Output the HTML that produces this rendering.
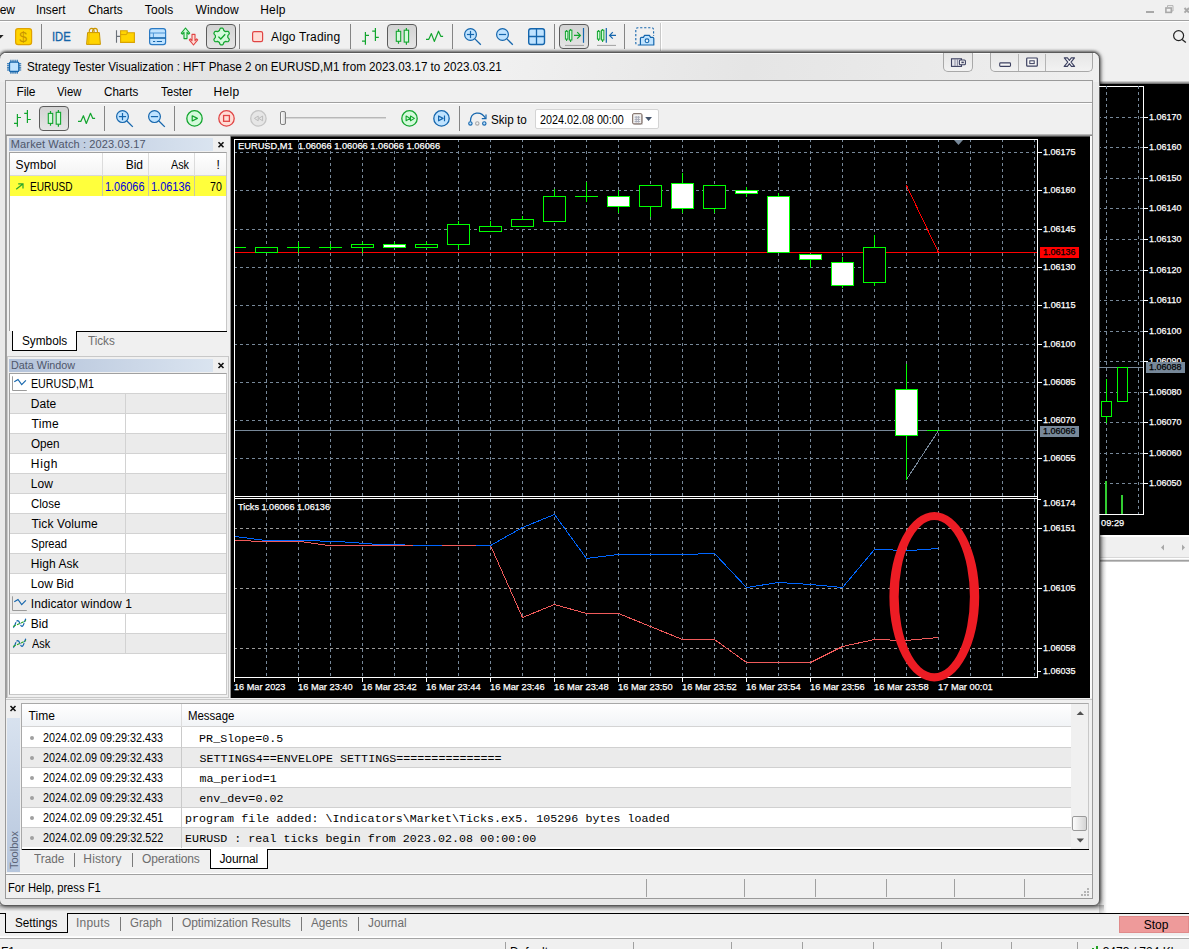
<!DOCTYPE html>
<html><head><meta charset="utf-8"><title>Strategy Tester Visualization</title>
<style>
html,body{margin:0;padding:0;background:#f0f0f0;}
#root{position:relative;width:1189px;height:949px;overflow:hidden;background:#f0f0f0;font-family:'Liberation Sans', sans-serif;}
#root div,#root span,#root svg{position:absolute;box-sizing:border-box;}
#root span{display:block;}
</style></head><body><div id="root">
<div style="left:0px;top:20px;width:1189px;height:1px;background:#a0a0a0;"></div>
<div style="left:0px;top:21px;width:1189px;height:1px;background:#ffffff;"></div>
<div style="left:41px;top:24px;width:1px;height:25px;background:#858585;"></div>
<div style="left:239px;top:24px;width:1px;height:25px;background:#858585;"></div>
<div style="left:350px;top:24px;width:1px;height:25px;background:#858585;"></div>
<div style="left:452px;top:24px;width:1px;height:25px;background:#858585;"></div>
<div style="left:554px;top:24px;width:1px;height:25px;background:#858585;"></div>
<div style="left:624px;top:24px;width:1px;height:25px;background:#858585;"></div>
<div style="left:660px;top:23px;width:1px;height:28px;background:#c8c8c8;"></div>
<div style="left:661px;top:23px;width:1px;height:28px;background:#ffffff;"></div>
<div style="left:206px;top:24px;width:30px;height:25px;background:linear-gradient(#d3d3d3,#e5e5e5);border:1px solid #5c5c5c;border-radius:4px;"></div>
<div style="left:387px;top:24px;width:30px;height:25px;background:linear-gradient(#d3d3d3,#e5e5e5);border:1px solid #5c5c5c;border-radius:4px;"></div>
<div style="left:559px;top:24px;width:30px;height:25px;background:linear-gradient(#d3d3d3,#e5e5e5);border:1px solid #5c5c5c;border-radius:4px;"></div>
<div style="left:1099px;top:81px;width:90px;height:3px;background:linear-gradient(#e0e0e0,#606060);"></div>
<div style="left:1099px;top:84px;width:90px;height:452px;background:#000;"></div>
<div style="left:1099px;top:535px;width:90px;height:1px;background:#ffffff;"></div>
<div style="left:1099px;top:536px;width:90px;height:1px;background:#ffffff;"></div>
<div style="left:1099px;top:537px;width:90px;height:20px;background:#f0f0f0;"></div>
<div style="left:1099px;top:557px;width:90px;height:1px;background:#d8d8d8;"></div>
<div style="left:1099px;top:558px;width:90px;height:1px;background:#ffffff;"></div>
<div style="left:1099px;top:559px;width:90px;height:1px;background:#e8e8e8;"></div>
<div style="left:1099px;top:560px;width:90px;height:1px;background:#a0a0a0;"></div>
<div style="left:1099px;top:561px;width:90px;height:1px;background:#c0c0c0;"></div>
<div style="left:1099px;top:562px;width:90px;height:351px;background:#fff;"></div>
<div style="left:1099px;top:537px;width:8px;height:376px;background:linear-gradient(90deg,rgba(0,0,0,.22),rgba(0,0,0,0));"></div>
<div style="left:0px;top:905px;width:1104px;height:8px;background:linear-gradient(rgba(0,0,0,.25),rgba(0,0,0,0) 80%);"></div>
<div style="left:0px;top:913px;width:1189px;height:1px;background:#000;"></div>
<div style="left:5px;top:913px;width:63px;height:20px;background:#f0f0f0;border:1px solid #000;border-top:none;"></div>
<div style="left:6px;top:913px;width:61px;height:1px;background:#f0f0f0;"></div>
<div style="left:120px;top:917px;width:1px;height:14px;background:#7a7a7a;"></div>
<div style="left:172px;top:917px;width:1px;height:14px;background:#7a7a7a;"></div>
<div style="left:301px;top:917px;width:1px;height:14px;background:#7a7a7a;"></div>
<div style="left:358px;top:917px;width:1px;height:14px;background:#7a7a7a;"></div>
<div style="left:1119px;top:916px;width:70px;height:17px;background:#ee9a9a;border:1px solid #e08a8a;"></div>
<div style="left:0px;top:936px;width:1189px;height:1px;background:#fbfbfb;"></div>
<div style="left:0px;top:937px;width:1189px;height:1px;background:#ffffff;"></div>
<div style="left:0px;top:938px;width:1189px;height:1px;background:#a4a4a4;"></div>
<div style="left:505px;top:942px;width:1px;height:7px;background:#a0a0a0;"></div>
<div style="left:633px;top:942px;width:1px;height:7px;background:#a0a0a0;"></div>
<div style="left:731px;top:942px;width:1px;height:7px;background:#a0a0a0;"></div>
<div style="left:802px;top:942px;width:1px;height:7px;background:#a0a0a0;"></div>
<div style="left:873px;top:942px;width:1px;height:7px;background:#a0a0a0;"></div>
<div style="left:941px;top:942px;width:1px;height:7px;background:#a0a0a0;"></div>
<div style="left:1011px;top:942px;width:1px;height:7px;background:#a0a0a0;"></div>
<div style="left:1077px;top:942px;width:1px;height:7px;background:#a0a0a0;"></div>
<div style="left:1092px;top:948px;width:2px;height:1px;background:#20a020;"></div>
<div style="left:1095.5px;top:946px;width:2px;height:3px;background:#20a020;"></div>
<div style="left:-1px;top:52px;width:1101px;height:854px;background:linear-gradient(100deg,#ededed 0%,#e3e3e3 22%,#f2f2f2 42%,#e5e5e5 68%,#efefef 100%) 0 0/100% 29px no-repeat,#e9e9e9;border:1px solid #5a5a5a;border-radius:7px 7px 6px 6px;box-shadow:0 -1px 3px rgba(0,0,0,.55),1px 1px 4px rgba(0,0,0,.5);"></div>
<div style="left:4px;top:53px;width:1091px;height:1px;background:#fbfbfb;"></div>
<div style="left:943px;top:53px;width:30px;height:19px;background:linear-gradient(#e6e6e6,#f2f2f2);border:1px solid #a8a8a8;border-top:none;border-radius:0 0 5px 5px;"></div>
<div style="left:990px;top:53px;width:103px;height:19px;background:linear-gradient(#e6e6e6,#f2f2f2);border:1px solid #a8a8a8;border-top:none;border-radius:0 0 5px 5px;"></div>
<div style="left:1018px;top:54px;width:1px;height:17px;background:#b4b4b4;"></div>
<div style="left:1045px;top:54px;width:1px;height:17px;background:#b4b4b4;"></div>
<div style="left:5px;top:80px;width:1088px;height:819px;background:#f0f0f0;border:1px solid #9a9a9a;"></div>
<div style="left:6px;top:102px;width:1086px;height:1px;background:#a0a0a0;"></div>
<div style="left:6px;top:103px;width:1086px;height:1px;background:#ffffff;"></div>
<div style="left:39px;top:106px;width:30px;height:25px;background:linear-gradient(#d3d3d3,#e5e5e5);border:1px solid #5c5c5c;border-radius:4px;"></div>
<div style="left:104px;top:106px;width:1px;height:25px;background:#858585;"></div>
<div style="left:174px;top:106px;width:1px;height:25px;background:#858585;"></div>
<div style="left:459px;top:106px;width:1px;height:25px;background:#858585;"></div>
<div style="left:286px;top:117px;width:100px;height:2px;background:#d6d6d6;border-top:1px solid #b8b8b8;"></div>
<div style="left:280px;top:111px;width:6px;height:14px;background:linear-gradient(90deg,#fff,#d8d8d8);border:1px solid #808080;border-radius:2px;"></div>
<div style="left:535px;top:109px;width:124px;height:20px;background:#fff;border:1px solid #d4d4d4;border-radius:2px;"></div>
<div style="left:6px;top:134px;width:1086px;height:1px;background:#b8b8b8;"></div>
<div style="left:6px;top:135px;width:1086px;height:1px;background:#8c8c8c;"></div>
<div style="left:6px;top:136px;width:225px;height:562px;background:#f0f0f0;"></div>
<div style="left:6px;top:136px;width:1px;height:562px;background:#a0a0a0;"></div>
<div style="left:7px;top:137px;width:222px;height:216px;background:#f0f0f0;"></div>
<div style="left:9px;top:138px;width:204px;height:13px;background:linear-gradient(90deg,#b3c2d9,#dae4f0);"></div>
<div style="left:9px;top:152px;width:218px;height:179px;background:#fff;border:1px solid #a0a0a0;border-bottom:none;border-right-color:#c8c8c8;"></div>
<div style="left:10px;top:153px;width:216px;height:23px;background:linear-gradient(#ffffff,#f3f3f3);"></div>
<div style="left:10px;top:175px;width:216px;height:1px;background:#d8d8d8;"></div>
<div style="left:102px;top:153px;width:1px;height:23px;background:#dcdcdc;"></div>
<div style="left:148px;top:153px;width:1px;height:23px;background:#dcdcdc;"></div>
<div style="left:194px;top:153px;width:1px;height:23px;background:#dcdcdc;"></div>
<div style="left:10px;top:176px;width:216px;height:20px;background:#ffff3c;"></div>
<div style="left:102px;top:176px;width:1px;height:20px;background:#c8c8a0;"></div>
<div style="left:148px;top:176px;width:1px;height:20px;background:#c8c8a0;"></div>
<div style="left:194px;top:176px;width:1px;height:20px;background:#c8c8a0;"></div>
<div style="left:77px;top:331px;width:150px;height:1px;background:#000;"></div>
<div style="left:12px;top:331px;width:65px;height:20px;background:#fff;border:1px solid #000;border-top:none;"></div>
<div style="left:7px;top:356px;width:222px;height:342px;background:#f0f0f0;border:1px solid #c8c8c8;"></div>
<div style="left:9px;top:359px;width:204px;height:13px;background:linear-gradient(90deg,#b3c2d9,#dae4f0);"></div>
<div style="left:9px;top:373px;width:218px;height:322px;background:#fff;border:1px solid #a0a0a0;border-right-color:#c8c8c8;border-bottom-color:#c8c8c8;"></div>
<div style="left:10px;top:393px;width:216px;height:1px;background:#d2d2d2;"></div>
<div style="left:10px;top:394px;width:216px;height:20px;background:#ebebeb;"></div>
<div style="left:10px;top:413px;width:216px;height:1px;background:#d2d2d2;"></div>
<div style="left:125px;top:394px;width:1px;height:20px;background:#d2d2d2;"></div>
<div style="left:10px;top:433px;width:216px;height:1px;background:#d2d2d2;"></div>
<div style="left:125px;top:414px;width:1px;height:20px;background:#d2d2d2;"></div>
<div style="left:10px;top:434px;width:216px;height:20px;background:#ebebeb;"></div>
<div style="left:10px;top:453px;width:216px;height:1px;background:#d2d2d2;"></div>
<div style="left:125px;top:434px;width:1px;height:20px;background:#d2d2d2;"></div>
<div style="left:10px;top:473px;width:216px;height:1px;background:#d2d2d2;"></div>
<div style="left:125px;top:454px;width:1px;height:20px;background:#d2d2d2;"></div>
<div style="left:10px;top:474px;width:216px;height:20px;background:#ebebeb;"></div>
<div style="left:10px;top:493px;width:216px;height:1px;background:#d2d2d2;"></div>
<div style="left:125px;top:474px;width:1px;height:20px;background:#d2d2d2;"></div>
<div style="left:10px;top:513px;width:216px;height:1px;background:#d2d2d2;"></div>
<div style="left:125px;top:494px;width:1px;height:20px;background:#d2d2d2;"></div>
<div style="left:10px;top:514px;width:216px;height:20px;background:#ebebeb;"></div>
<div style="left:10px;top:533px;width:216px;height:1px;background:#d2d2d2;"></div>
<div style="left:125px;top:514px;width:1px;height:20px;background:#d2d2d2;"></div>
<div style="left:10px;top:553px;width:216px;height:1px;background:#d2d2d2;"></div>
<div style="left:125px;top:534px;width:1px;height:20px;background:#d2d2d2;"></div>
<div style="left:10px;top:554px;width:216px;height:20px;background:#ebebeb;"></div>
<div style="left:10px;top:573px;width:216px;height:1px;background:#d2d2d2;"></div>
<div style="left:125px;top:554px;width:1px;height:20px;background:#d2d2d2;"></div>
<div style="left:10px;top:593px;width:216px;height:1px;background:#d2d2d2;"></div>
<div style="left:125px;top:574px;width:1px;height:20px;background:#d2d2d2;"></div>
<div style="left:10px;top:594px;width:216px;height:20px;background:#ebebeb;"></div>
<div style="left:10px;top:613px;width:216px;height:1px;background:#d2d2d2;"></div>
<div style="left:10px;top:633px;width:216px;height:1px;background:#d2d2d2;"></div>
<div style="left:125px;top:614px;width:1px;height:20px;background:#d2d2d2;"></div>
<div style="left:10px;top:634px;width:216px;height:20px;background:#ebebeb;"></div>
<div style="left:10px;top:653px;width:216px;height:1px;background:#d2d2d2;"></div>
<div style="left:125px;top:634px;width:1px;height:20px;background:#d2d2d2;"></div>
<div style="left:6px;top:698px;width:1086px;height:2px;background:#f0f0f0;"></div>
<div style="left:6px;top:699px;width:1086px;height:1px;background:#c8c8c8;"></div>
<div style="left:6px;top:700px;width:1086px;height:174px;background:#f0f0f0;"></div>
<div style="left:7px;top:718px;width:13px;height:154px;background:linear-gradient(#d8e2ef,#b6c6dd);"></div>
<div style="left:21px;top:703px;width:1068px;height:147px;background:#fff;border:1px solid #a8a8a8;border-bottom:none;border-right-color:#c8c8c8;"></div>
<div style="left:22px;top:704px;width:1049px;height:23px;background:linear-gradient(#ffffff,#f1f3f6);"></div>
<div style="left:22px;top:726px;width:1049px;height:1px;background:#d4d4d4;"></div>
<div style="left:181px;top:704px;width:1px;height:23px;background:#dcdcdc;"></div>
<div style="left:1071px;top:704px;width:17px;height:145px;background:#f0f0f0;"></div>
<div style="left:1072px;top:816px;width:15px;height:15px;background:linear-gradient(90deg,#fdfdfd,#d4d4d4);border:1px solid #9a9a9a;border-radius:2px;"></div>
<div style="left:22px;top:747px;width:1049px;height:1px;background:#d0d0d0;"></div>
<div style="left:181px;top:727px;width:1px;height:21px;background:#cacaca;"></div>
<div style="left:29.5px;top:735.5px;width:4px;height:4px;background:#a0a0a0;border-radius:2px;"></div>
<div style="left:22px;top:748px;width:1049px;height:19px;background:#ebebeb;"></div>
<div style="left:22px;top:767px;width:1049px;height:1px;background:#d0d0d0;"></div>
<div style="left:181px;top:747px;width:1px;height:21px;background:#cacaca;"></div>
<div style="left:29.5px;top:755.5px;width:4px;height:4px;background:#a0a0a0;border-radius:2px;"></div>
<div style="left:22px;top:787px;width:1049px;height:1px;background:#d0d0d0;"></div>
<div style="left:181px;top:767px;width:1px;height:21px;background:#cacaca;"></div>
<div style="left:29.5px;top:775.5px;width:4px;height:4px;background:#a0a0a0;border-radius:2px;"></div>
<div style="left:22px;top:788px;width:1049px;height:19px;background:#ebebeb;"></div>
<div style="left:22px;top:807px;width:1049px;height:1px;background:#d0d0d0;"></div>
<div style="left:181px;top:787px;width:1px;height:21px;background:#cacaca;"></div>
<div style="left:29.5px;top:795.5px;width:4px;height:4px;background:#a0a0a0;border-radius:2px;"></div>
<div style="left:22px;top:827px;width:1049px;height:1px;background:#d0d0d0;"></div>
<div style="left:181px;top:807px;width:1px;height:21px;background:#cacaca;"></div>
<div style="left:29.5px;top:815.5px;width:4px;height:4px;background:#a0a0a0;border-radius:2px;"></div>
<div style="left:22px;top:828px;width:1049px;height:19px;background:#ebebeb;"></div>
<div style="left:181px;top:827px;width:1px;height:21px;background:#cacaca;"></div>
<div style="left:29.5px;top:835.5px;width:4px;height:4px;background:#a0a0a0;border-radius:2px;"></div>
<div style="left:22px;top:849px;width:1067px;height:1px;background:#000;"></div>
<div style="left:210px;top:849px;width:58px;height:20px;background:#fff;border:1px solid #000;border-top:none;"></div>
<div style="left:74px;top:853px;width:1px;height:14px;background:#7a7a7a;"></div>
<div style="left:132px;top:853px;width:1px;height:14px;background:#7a7a7a;"></div>
<div style="left:6px;top:873px;width:1086px;height:1px;background:#ffffff;"></div>
<div style="left:6px;top:874px;width:1086px;height:1px;background:#a0a0a0;"></div>
<div style="left:646px;top:879px;width:1px;height:18px;background:#a0a0a0;"></div>
<div style="left:744px;top:879px;width:1px;height:18px;background:#a0a0a0;"></div>
<div style="left:815px;top:879px;width:1px;height:18px;background:#a0a0a0;"></div>
<div style="left:886px;top:879px;width:1px;height:18px;background:#a0a0a0;"></div>
<div style="left:954px;top:879px;width:1px;height:18px;background:#a0a0a0;"></div>
<div style="left:1024px;top:879px;width:1px;height:18px;background:#a0a0a0;"></div>
<div style="left:1084px;top:894px;width:2px;height:2px;background:#b4b4b4;"></div>
<div style="left:1087px;top:894px;width:2px;height:2px;background:#b4b4b4;"></div>
<div style="left:1087px;top:891px;width:2px;height:2px;background:#b4b4b4;"></div>
<div style="left:1087px;top:888px;width:2px;height:2px;background:#b4b4b4;"></div>
<div style="left:1084px;top:891px;width:2px;height:2px;background:#b4b4b4;"></div>
<div style="left:1081px;top:894px;width:2px;height:2px;background:#b4b4b4;"></div>
<svg width="1189" height="949" viewBox="0 0 1189 949" style="left:0;top:0">
<rect x="231" y="136" width="859" height="562" fill="#000" />
<rect x="230" y="136" width="861" height="1" fill="#4a4a4a" shape-rendering="crispEdges"/>
<rect x="230" y="136" width="1" height="562" fill="#909090" />
<g shape-rendering="crispEdges" stroke-dasharray="3 3" stroke-width="1" fill="none">
<line x1="266.5" y1="139" x2="266.5" y2="677" stroke="#778899"/>
<line x1="298.5" y1="139" x2="298.5" y2="677" stroke="#778899"/>
<line x1="330.5" y1="139" x2="330.5" y2="677" stroke="#778899"/>
<line x1="362.5" y1="139" x2="362.5" y2="677" stroke="#778899"/>
<line x1="394.5" y1="139" x2="394.5" y2="677" stroke="#778899"/>
<line x1="426.5" y1="139" x2="426.5" y2="677" stroke="#778899"/>
<line x1="458.5" y1="139" x2="458.5" y2="677" stroke="#778899"/>
<line x1="490.5" y1="139" x2="490.5" y2="677" stroke="#778899"/>
<line x1="522.5" y1="139" x2="522.5" y2="677" stroke="#778899"/>
<line x1="554.5" y1="139" x2="554.5" y2="677" stroke="#778899"/>
<line x1="586.5" y1="139" x2="586.5" y2="677" stroke="#778899"/>
<line x1="618.5" y1="139" x2="618.5" y2="677" stroke="#778899"/>
<line x1="650.5" y1="139" x2="650.5" y2="677" stroke="#778899"/>
<line x1="682.5" y1="139" x2="682.5" y2="677" stroke="#778899"/>
<line x1="714.5" y1="139" x2="714.5" y2="677" stroke="#778899"/>
<line x1="746.5" y1="139" x2="746.5" y2="677" stroke="#778899"/>
<line x1="778.5" y1="139" x2="778.5" y2="677" stroke="#778899"/>
<line x1="810.5" y1="139" x2="810.5" y2="677" stroke="#778899"/>
<line x1="842.5" y1="139" x2="842.5" y2="677" stroke="#778899"/>
<line x1="874.5" y1="139" x2="874.5" y2="677" stroke="#778899"/>
<line x1="906.5" y1="139" x2="906.5" y2="677" stroke="#778899"/>
<line x1="938.5" y1="139" x2="938.5" y2="677" stroke="#778899"/>
<line x1="970.5" y1="139" x2="970.5" y2="677" stroke="#778899"/>
<line x1="1002.5" y1="139" x2="1002.5" y2="677" stroke="#778899"/>
<line x1="1034.5" y1="139" x2="1034.5" y2="677" stroke="#778899"/>
<line x1="234" y1="152.5" x2="1037" y2="152.5" stroke="#778899"/>
<line x1="234" y1="190.5" x2="1037" y2="190.5" stroke="#778899"/>
<line x1="234" y1="229.5" x2="1037" y2="229.5" stroke="#778899"/>
<line x1="234" y1="267.5" x2="1037" y2="267.5" stroke="#778899"/>
<line x1="234" y1="305.5" x2="1037" y2="305.5" stroke="#778899"/>
<line x1="234" y1="344.5" x2="1037" y2="344.5" stroke="#778899"/>
<line x1="234" y1="382.5" x2="1037" y2="382.5" stroke="#778899"/>
<line x1="234" y1="420.5" x2="1037" y2="420.5" stroke="#778899"/>
<line x1="234" y1="458.5" x2="1037" y2="458.5" stroke="#778899"/>
<line x1="234" y1="528.5" x2="1037" y2="528.5" stroke="#9a9a9a"/>
<line x1="234" y1="588.5" x2="1037" y2="588.5" stroke="#9a9a9a"/>
<line x1="234" y1="648.5" x2="1037" y2="648.5" stroke="#9a9a9a"/>
</g>
<rect x="1090" y="136" width="2" height="562" fill="#fafafa" />
<rect x="234" y="139" width="804" height="1" fill="#ffffff" shape-rendering="crispEdges"/>
<rect x="234" y="139" width="1" height="539" fill="#ffffff" shape-rendering="crispEdges"/>
<rect x="1037" y="139" width="1" height="539" fill="#ffffff" shape-rendering="crispEdges"/>
<rect x="234" y="496" width="804" height="1" fill="#ffffff" shape-rendering="crispEdges"/>
<rect x="235" y="497" width="802" height="1" fill="#000" shape-rendering="crispEdges"/>
<rect x="234" y="498" width="804" height="1" fill="#ffffff" shape-rendering="crispEdges"/>
<rect x="234" y="677" width="804" height="1" fill="#ffffff" shape-rendering="crispEdges"/>
<rect x="1038" y="152" width="4" height="1" fill="#ffffff" shape-rendering="crispEdges"/>
<rect x="1038" y="190" width="4" height="1" fill="#ffffff" shape-rendering="crispEdges"/>
<rect x="1038" y="229" width="4" height="1" fill="#ffffff" shape-rendering="crispEdges"/>
<rect x="1038" y="267" width="4" height="1" fill="#ffffff" shape-rendering="crispEdges"/>
<rect x="1038" y="305" width="4" height="1" fill="#ffffff" shape-rendering="crispEdges"/>
<rect x="1038" y="344" width="4" height="1" fill="#ffffff" shape-rendering="crispEdges"/>
<rect x="1038" y="382" width="4" height="1" fill="#ffffff" shape-rendering="crispEdges"/>
<rect x="1038" y="420" width="4" height="1" fill="#ffffff" shape-rendering="crispEdges"/>
<rect x="1038" y="458" width="4" height="1" fill="#ffffff" shape-rendering="crispEdges"/>
<rect x="1038" y="528" width="4" height="1" fill="#ffffff" shape-rendering="crispEdges"/>
<rect x="1038" y="588" width="4" height="1" fill="#ffffff" shape-rendering="crispEdges"/>
<rect x="1038" y="648" width="4" height="1" fill="#ffffff" shape-rendering="crispEdges"/>
<rect x="1038" y="499" width="3" height="1" fill="#ffffff" shape-rendering="crispEdges"/>
<rect x="1038" y="671" width="3" height="1" fill="#ffffff" shape-rendering="crispEdges"/>
<rect x="234" y="677" width="1" height="5" fill="#ffffff" shape-rendering="crispEdges"/>
<rect x="298" y="677" width="1" height="5" fill="#ffffff" shape-rendering="crispEdges"/>
<rect x="362" y="677" width="1" height="5" fill="#ffffff" shape-rendering="crispEdges"/>
<rect x="426" y="677" width="1" height="5" fill="#ffffff" shape-rendering="crispEdges"/>
<rect x="490" y="677" width="1" height="5" fill="#ffffff" shape-rendering="crispEdges"/>
<rect x="554" y="677" width="1" height="5" fill="#ffffff" shape-rendering="crispEdges"/>
<rect x="618" y="677" width="1" height="5" fill="#ffffff" shape-rendering="crispEdges"/>
<rect x="682" y="677" width="1" height="5" fill="#ffffff" shape-rendering="crispEdges"/>
<rect x="746" y="677" width="1" height="5" fill="#ffffff" shape-rendering="crispEdges"/>
<rect x="810" y="677" width="1" height="5" fill="#ffffff" shape-rendering="crispEdges"/>
<rect x="874" y="677" width="1" height="5" fill="#ffffff" shape-rendering="crispEdges"/>
<rect x="235" y="430" width="802" height="1" fill="#778899" shape-rendering="crispEdges"/>
<rect x="235" y="252" width="802" height="1" fill="#ff0000" shape-rendering="crispEdges"/>
<rect x="255.5" y="247.5" width="22" height="5" fill="#000" stroke="#00ff00" stroke-width="1" shape-rendering="crispEdges"/>
<rect x="362" y="242" width="1" height="3" fill="#00ff00" shape-rendering="crispEdges"/>
<rect x="362" y="247" width="1" height="6" fill="#00ff00" shape-rendering="crispEdges"/>
<rect x="351.5" y="244.5" width="22" height="3" fill="#000" stroke="#00ff00" stroke-width="1" shape-rendering="crispEdges"/>
<rect x="394" y="242" width="1" height="3" fill="#00ff00" shape-rendering="crispEdges"/>
<rect x="383.5" y="244.5" width="22" height="3" fill="#fff" stroke="#00ff00" stroke-width="1" shape-rendering="crispEdges"/>
<rect x="426" y="242" width="1" height="3" fill="#00ff00" shape-rendering="crispEdges"/>
<rect x="415.5" y="244.5" width="22" height="3" fill="#000" stroke="#00ff00" stroke-width="1" shape-rendering="crispEdges"/>
<rect x="458" y="221" width="1" height="4" fill="#00ff00" shape-rendering="crispEdges"/>
<rect x="458" y="244" width="1" height="5" fill="#00ff00" shape-rendering="crispEdges"/>
<rect x="447.5" y="224.5" width="22" height="20" fill="#000" stroke="#00ff00" stroke-width="1" shape-rendering="crispEdges"/>
<rect x="490" y="221" width="1" height="6" fill="#00ff00" shape-rendering="crispEdges"/>
<rect x="479.5" y="226.5" width="22" height="5" fill="#000" stroke="#00ff00" stroke-width="1" shape-rendering="crispEdges"/>
<rect x="522" y="216" width="1" height="4" fill="#00ff00" shape-rendering="crispEdges"/>
<rect x="511.5" y="219.5" width="22" height="7" fill="#000" stroke="#00ff00" stroke-width="1" shape-rendering="crispEdges"/>
<rect x="554" y="189" width="1" height="8" fill="#00ff00" shape-rendering="crispEdges"/>
<rect x="543.5" y="196.5" width="22" height="25" fill="#000" stroke="#00ff00" stroke-width="1" shape-rendering="crispEdges"/>
<rect x="618" y="190" width="1" height="7" fill="#00ff00" shape-rendering="crispEdges"/>
<rect x="618" y="206" width="1" height="7" fill="#00ff00" shape-rendering="crispEdges"/>
<rect x="607.5" y="196.5" width="22" height="10" fill="#fff" stroke="#00ff00" stroke-width="1" shape-rendering="crispEdges"/>
<rect x="650" y="206" width="1" height="11" fill="#00ff00" shape-rendering="crispEdges"/>
<rect x="639.5" y="185.5" width="22" height="21" fill="#000" stroke="#00ff00" stroke-width="1" shape-rendering="crispEdges"/>
<rect x="682" y="173" width="1" height="11" fill="#00ff00" shape-rendering="crispEdges"/>
<rect x="682" y="208" width="1" height="5" fill="#00ff00" shape-rendering="crispEdges"/>
<rect x="671.5" y="183.5" width="22" height="25" fill="#fff" stroke="#00ff00" stroke-width="1" shape-rendering="crispEdges"/>
<rect x="714" y="208" width="1" height="5" fill="#00ff00" shape-rendering="crispEdges"/>
<rect x="703.5" y="185.5" width="22" height="23" fill="#000" stroke="#00ff00" stroke-width="1" shape-rendering="crispEdges"/>
<rect x="746" y="187" width="1" height="4" fill="#00ff00" shape-rendering="crispEdges"/>
<rect x="746" y="193" width="1" height="4" fill="#00ff00" shape-rendering="crispEdges"/>
<rect x="735.5" y="190.5" width="22" height="3" fill="#fff" stroke="#00ff00" stroke-width="1" shape-rendering="crispEdges"/>
<rect x="778" y="193" width="1" height="4" fill="#00ff00" shape-rendering="crispEdges"/>
<rect x="767.5" y="196.5" width="22" height="56" fill="#fff" stroke="#00ff00" stroke-width="1" shape-rendering="crispEdges"/>
<rect x="810" y="259" width="1" height="9" fill="#00ff00" shape-rendering="crispEdges"/>
<rect x="799.5" y="254.5" width="22" height="5" fill="#fff" stroke="#00ff00" stroke-width="1" shape-rendering="crispEdges"/>
<rect x="842" y="257" width="1" height="6" fill="#00ff00" shape-rendering="crispEdges"/>
<rect x="842" y="285" width="1" height="3" fill="#00ff00" shape-rendering="crispEdges"/>
<rect x="831.5" y="262.5" width="22" height="23" fill="#fff" stroke="#00ff00" stroke-width="1" shape-rendering="crispEdges"/>
<rect x="874" y="235" width="1" height="13" fill="#00ff00" shape-rendering="crispEdges"/>
<rect x="874" y="282" width="1" height="4" fill="#00ff00" shape-rendering="crispEdges"/>
<rect x="863.5" y="247.5" width="22" height="35" fill="#000" stroke="#00ff00" stroke-width="1" shape-rendering="crispEdges"/>
<rect x="906" y="364" width="1" height="26" fill="#00ff00" shape-rendering="crispEdges"/>
<rect x="906" y="435" width="1" height="45" fill="#00ff00" shape-rendering="crispEdges"/>
<rect x="895.5" y="389.5" width="22" height="46" fill="#fff" stroke="#00ff00" stroke-width="1" shape-rendering="crispEdges"/>
<rect x="235" y="247" width="11" height="1" fill="#00ff00" shape-rendering="crispEdges"/>
<rect x="287" y="247" width="23" height="1" fill="#00ff00" shape-rendering="crispEdges"/>
<rect x="298" y="242" width="1" height="11" fill="#00ff00" shape-rendering="crispEdges"/>
<rect x="319" y="247" width="23" height="1" fill="#00ff00" shape-rendering="crispEdges"/>
<rect x="330" y="244" width="1" height="6" fill="#00ff00" shape-rendering="crispEdges"/>
<rect x="575" y="196" width="23" height="1" fill="#00ff00" shape-rendering="crispEdges"/>
<rect x="586" y="182" width="1" height="20" fill="#00ff00" shape-rendering="crispEdges"/>
<rect x="927" y="430" width="23" height="1" fill="#00ff00" shape-rendering="crispEdges"/>
<g shape-rendering="crispEdges" stroke-width="1" fill="none">
<line x1="906.5" y1="185.5" x2="938.5" y2="252.5" stroke="#ff0000"/>
<line x1="906.5" y1="479.5" x2="938.5" y2="430.5" stroke="#778899"/>
<polyline points="235.5,540.5 265.5,541.5 300.5,541.5 328.5,545.5 490.5,545.5 522.5,617.5 554.5,604.5 586.5,613.5 618.5,613.5 682.5,639.5 714.5,639.5 746.5,662.5 810.5,662.5 842.5,646.5 874.5,639.5 905.5,640.5 938.5,637.5" stroke="#f05a5a"/>
<polyline points="235.5,536.5 250.5,538.5 265.5,540.5 300.5,540.5 338.5,541.5 378.5,544.5 430.5,545.5 490.5,545.5 522.5,527.5 554.5,514.5 586.5,558.5 618.5,554.5 682.5,554.5 714.5,553.5 746.5,587.5 778.5,582.5 810.5,584.5 842.5,587.5 874.5,549.5 910.5,550.5 938.5,548.5" stroke="#0066ff"/>
</g>
<rect x="379" y="545" width="34" height="1" fill="#f05a5a" shape-rendering="crispEdges"/>
<rect x="442" y="545" width="34" height="1" fill="#f05a5a" shape-rendering="crispEdges"/>
<polygon points="954,140 963,140 958.5,145" fill="#778899"/>
<path d="M889.4,596.7 a44.9,84.7 0 1,1 89.8,0 a44.9,84.7 0 1,1 -89.8,0 Z M898.6999999999999,596.7 a35.6,76.6 0 1,0 71.2,0 a35.6,76.6 0 1,0 -71.2,0 Z" fill="#ed1c24" fill-rule="evenodd"/>
<rect x="1099" y="86" width="45" height="1" fill="#ffffff" shape-rendering="crispEdges"/>
<rect x="1143" y="86" width="1" height="429" fill="#ffffff" shape-rendering="crispEdges"/>
<rect x="1099" y="514" width="45" height="1" fill="#ffffff" shape-rendering="crispEdges"/>
<g shape-rendering="crispEdges" stroke-dasharray="3 3" stroke-width="1" fill="none">
<line x1="1106.5" y1="86" x2="1106.5" y2="514" stroke="#778899"/>
<line x1="1138.5" y1="86" x2="1138.5" y2="514" stroke="#778899"/>
<line x1="1104" y1="117.5" x2="1143" y2="117.5" stroke="#778899"/>
<rect x="1100" y="117" width="1" height="1" fill="#778899"/>
<line x1="1104" y1="147.5" x2="1143" y2="147.5" stroke="#778899"/>
<rect x="1100" y="147" width="1" height="1" fill="#778899"/>
<line x1="1104" y1="178.5" x2="1143" y2="178.5" stroke="#778899"/>
<rect x="1100" y="178" width="1" height="1" fill="#778899"/>
<line x1="1104" y1="208.5" x2="1143" y2="208.5" stroke="#778899"/>
<rect x="1100" y="208" width="1" height="1" fill="#778899"/>
<line x1="1104" y1="239.5" x2="1143" y2="239.5" stroke="#778899"/>
<rect x="1100" y="239" width="1" height="1" fill="#778899"/>
<line x1="1104" y1="270.5" x2="1143" y2="270.5" stroke="#778899"/>
<rect x="1100" y="270" width="1" height="1" fill="#778899"/>
<line x1="1104" y1="300.5" x2="1143" y2="300.5" stroke="#778899"/>
<rect x="1100" y="300" width="1" height="1" fill="#778899"/>
<line x1="1104" y1="331.5" x2="1143" y2="331.5" stroke="#778899"/>
<rect x="1100" y="331" width="1" height="1" fill="#778899"/>
<line x1="1104" y1="361.5" x2="1143" y2="361.5" stroke="#778899"/>
<rect x="1100" y="361" width="1" height="1" fill="#778899"/>
<line x1="1104" y1="392.5" x2="1143" y2="392.5" stroke="#778899"/>
<rect x="1100" y="392" width="1" height="1" fill="#778899"/>
<line x1="1104" y1="422.5" x2="1143" y2="422.5" stroke="#778899"/>
<rect x="1100" y="422" width="1" height="1" fill="#778899"/>
<line x1="1104" y1="453.5" x2="1143" y2="453.5" stroke="#778899"/>
<rect x="1100" y="453" width="1" height="1" fill="#778899"/>
<line x1="1104" y1="483.5" x2="1143" y2="483.5" stroke="#778899"/>
<rect x="1100" y="483" width="1" height="1" fill="#778899"/>
</g>
<rect x="1144" y="117" width="4" height="1" fill="#ffffff" shape-rendering="crispEdges"/>
<rect x="1144" y="147" width="4" height="1" fill="#ffffff" shape-rendering="crispEdges"/>
<rect x="1144" y="178" width="4" height="1" fill="#ffffff" shape-rendering="crispEdges"/>
<rect x="1144" y="208" width="4" height="1" fill="#ffffff" shape-rendering="crispEdges"/>
<rect x="1144" y="239" width="4" height="1" fill="#ffffff" shape-rendering="crispEdges"/>
<rect x="1144" y="270" width="4" height="1" fill="#ffffff" shape-rendering="crispEdges"/>
<rect x="1144" y="300" width="4" height="1" fill="#ffffff" shape-rendering="crispEdges"/>
<rect x="1144" y="331" width="4" height="1" fill="#ffffff" shape-rendering="crispEdges"/>
<rect x="1144" y="361" width="4" height="1" fill="#ffffff" shape-rendering="crispEdges"/>
<rect x="1144" y="392" width="4" height="1" fill="#ffffff" shape-rendering="crispEdges"/>
<rect x="1144" y="422" width="4" height="1" fill="#ffffff" shape-rendering="crispEdges"/>
<rect x="1144" y="453" width="4" height="1" fill="#ffffff" shape-rendering="crispEdges"/>
<rect x="1144" y="483" width="4" height="1" fill="#ffffff" shape-rendering="crispEdges"/>
<rect x="1099" y="367" width="44" height="1" fill="#778899" shape-rendering="crispEdges"/>
<rect x="1106" y="379" width="1" height="23" fill="#00ff00" shape-rendering="crispEdges"/>
<rect x="1106" y="416" width="1" height="7" fill="#00ff00" shape-rendering="crispEdges"/>
<rect x="1101.5" y="401.5" width="10" height="15" fill="#000" stroke="#00ff00" shape-rendering="crispEdges"/>
<rect x="1117.5" y="367.5" width="10" height="34" fill="#000" stroke="#00ff00" shape-rendering="crispEdges"/>
<rect x="1105" y="481" width="2" height="33" fill="#32cd32" shape-rendering="crispEdges"/>
<rect x="1121" y="495" width="2" height="19" fill="#32cd32" shape-rendering="crispEdges"/>
<polygon points="1161,547.5 1164,544.5 1164,550.5" fill="#a8a8a8"/><polygon points="1185,547.5 1182,544.5 1182,550.5" fill="#a8a8a8"/>
<polygon points="-3,35 3.6,35 0.3,38.4" fill="#222"/>
<rect x="15.6" y="28.6" width="16" height="16" rx="2.6" fill="#ffd400" stroke="#e0a200" stroke-width="1.2"/>
<path d="M89.3,32.3 V31 a2.4,2.6 0 0 1 4.8,0 V32.3 M92.6,32.3 V31 a2.4,2.6 0 0 1 4.8,0 V32.3" fill="none" stroke="#c99500" stroke-width="1.1"/>
<path d="M87.6,32.6 H99.4 L100.4,44.4 H86.6 Z" fill="#ffd400" stroke="#c99500" stroke-width="1"/>
<path d="M89.3,32.6 L88.6,44.4" stroke="#e0b000" stroke-width="0.8"/>
<path d="M116.5,30.2 V42.8 M116.5,36.4 H120.5" stroke="#6a7078" stroke-width="1.1" fill="none"/>
<path d="M120.6,30.7 H127.2 V32.8 H134.4 V42.4 H120.6 Z" fill="#ffd400" stroke="#d9a300" stroke-width="1.1"/>
<path d="M120.6,34.6 H126 Q127.2,34.6 127.2,32.8" fill="none" stroke="#d9a300" stroke-width="1"/>
<rect x="149.6" y="28.6" width="16" height="16" rx="2.4" fill="#bfe3ff" stroke="#2a7ac4" stroke-width="1.2"/>
<path d="M150,33 H165.4 M153.4,33 V37.5" stroke="#4a94d6" stroke-width="1" fill="none"/>
<path d="M149.6,38 H165.6" stroke="#1566ad" stroke-width="1.6"/>
<path d="M153,41.5 H155.2 M156.8,41.5 H162" stroke="#1566ad" stroke-width="1.2"/>
<path d="M185.5,28 L189.7,33.2 L188.7,34.2 L187,32.4 V38.6 H184 V32.4 L182.3,34.2 L181.3,33.2 Z" fill="#d4fadb" stroke="#12a52e" stroke-width="1.1" stroke-linejoin="round"/>
<path d="M193.5,45 L197.7,39.8 L196.7,38.8 L195,40.6 V34.4 H192 V40.6 L190.3,38.8 L189.3,39.8 Z" fill="#ffddd6" stroke="#e04444" stroke-width="1.1" stroke-linejoin="round"/>
<polygon points="221.60,28.10 222.33,28.13 223.02,28.44 223.49,29.45 223.80,30.47 224.22,30.88 224.70,31.13 225.16,31.42 225.73,31.58 226.76,31.34 227.87,31.24 228.48,31.68 228.87,32.30 229.21,32.95 229.29,33.70 228.65,34.61 227.92,35.39 227.78,35.96 227.80,36.50 227.78,37.04 227.92,37.61 228.65,38.39 229.29,39.30 229.21,40.05 228.87,40.70 228.48,41.32 227.87,41.76 226.76,41.66 225.73,41.42 225.16,41.58 224.70,41.87 224.22,42.12 223.80,42.53 223.49,43.55 223.02,44.56 222.33,44.87 221.60,44.90 220.87,44.87 220.18,44.56 219.71,43.55 219.40,42.53 218.98,42.12 218.50,41.87 218.04,41.58 217.47,41.42 216.44,41.66 215.33,41.76 214.72,41.32 214.33,40.70 213.99,40.05 213.91,39.30 214.55,38.39 215.28,37.61 215.42,37.04 215.40,36.50 215.42,35.96 215.28,35.39 214.55,34.61 213.91,33.70 213.99,32.95 214.33,32.30 214.72,31.68 215.33,31.24 216.44,31.34 217.47,31.58 218.04,31.42 218.50,31.13 218.98,30.88 219.40,30.47 219.71,29.45 220.18,28.44 220.87,28.13" fill="#d4fadb" stroke="#12a52e" stroke-width="1.2" stroke-linejoin="round"/>
<path d="M218.4,36.6 L220.8,39 L225.2,34.2" fill="none" stroke="#12a52e" stroke-width="1.3"/>
<rect x="252.6" y="31.6" width="10" height="10" rx="1.6" fill="#ffddd6" stroke="#e04444" stroke-width="1.2"/>
<g transform="translate(0,0)"><path d="M365.4,32 V44.7 M362,41.2 H365.4 M365.4,35.4 H369 M375.4,28 V41 M372.2,31.2 H375.4 M375.4,37.4 H378.8" stroke="#12a52e" stroke-width="1.2" fill="none"/></g>
<g transform="translate(0,0)"><path d="M398.5,29 V43.7 M406.4,28 V44.7" stroke="#12a52e" stroke-width="1.2"/><rect x="396.3" y="31.3" width="4.4" height="10" fill="#d4fadb" stroke="#12a52e" stroke-width="1.1"/><rect x="404.2" y="30.2" width="4.4" height="11.9" fill="#d4fadb" stroke="#12a52e" stroke-width="1.1"/></g>
<g transform="translate(0,0)"><polyline points="426,39.3 428.8,39.3 431.4,33.6 434.3,41.4 438.5,31.2 440.8,36.3 443.1,36.3" stroke="#12a52e" stroke-width="1.2" fill="none" stroke-linejoin="round"/></g>
<g transform="translate(0,0)"><circle cx="470.5" cy="34.5" r="5.9" fill="#bfe3ff" stroke="#1566ad" stroke-width="1.2"/><path d="M474.9,38.9 L480.8,44.8" stroke="#1566ad" stroke-width="1.3"/><path d="M466.9,34.5 H474.1" stroke="#1566ad" stroke-width="1.2"/><path d="M470.5,30.9 V38.1" stroke="#1566ad" stroke-width="1.2"/></g>
<g transform="translate(0,0)"><circle cx="502.5" cy="34.5" r="5.9" fill="#bfe3ff" stroke="#1566ad" stroke-width="1.2"/><path d="M506.9,38.9 L512.8,44.8" stroke="#1566ad" stroke-width="1.3"/><path d="M498.9,34.5 H506.1" stroke="#1566ad" stroke-width="1.2"/></g>
<g transform="translate(-348,82.1)"><path d="M365.4,32 V44.7 M362,41.2 H365.4 M365.4,35.4 H369 M375.4,28 V41 M372.2,31.2 H375.4 M375.4,37.4 H378.8" stroke="#12a52e" stroke-width="1.2" fill="none"/></g>
<g transform="translate(-348,82.1)"><path d="M398.5,29 V43.7 M406.4,28 V44.7" stroke="#12a52e" stroke-width="1.2"/><rect x="396.3" y="31.3" width="4.4" height="10" fill="#d4fadb" stroke="#12a52e" stroke-width="1.1"/><rect x="404.2" y="30.2" width="4.4" height="11.9" fill="#d4fadb" stroke="#12a52e" stroke-width="1.1"/></g>
<g transform="translate(-348,82.1)"><polyline points="426,39.3 428.8,39.3 431.4,33.6 434.3,41.4 438.5,31.2 440.8,36.3 443.1,36.3" stroke="#12a52e" stroke-width="1.2" fill="none" stroke-linejoin="round"/></g>
<g transform="translate(-348,82.1)"><circle cx="470.5" cy="34.5" r="5.9" fill="#bfe3ff" stroke="#1566ad" stroke-width="1.2"/><path d="M474.9,38.9 L480.8,44.8" stroke="#1566ad" stroke-width="1.3"/><path d="M466.9,34.5 H474.1" stroke="#1566ad" stroke-width="1.2"/><path d="M470.5,30.9 V38.1" stroke="#1566ad" stroke-width="1.2"/></g>
<g transform="translate(-348,82.1)"><circle cx="502.5" cy="34.5" r="5.9" fill="#bfe3ff" stroke="#1566ad" stroke-width="1.2"/><path d="M506.9,38.9 L512.8,44.8" stroke="#1566ad" stroke-width="1.3"/><path d="M498.9,34.5 H506.1" stroke="#1566ad" stroke-width="1.2"/></g>
<rect x="528.7" y="28.7" width="15.8" height="15.8" rx="2.2" fill="#bfe3ff" stroke="#1566ad" stroke-width="1.4"/><path d="M536.5,28.7 V44.5 M528.7,36.5 H544.5" stroke="#1566ad" stroke-width="1.3"/>
<path d="M566.6,30.1 V41 M570.6,29 V42" stroke="#12a52e" stroke-width="1.1"/><rect x="565.4" y="31.3" width="2.5" height="7.8" fill="#d4fadb" stroke="#12a52e" stroke-width="1"/><rect x="569.4" y="30.2" width="2.5" height="9.8" fill="#d4fadb" stroke="#12a52e" stroke-width="1"/>
<path d="M574,35.4 H580.4 M577.2,32.2 L580.4,35.4 L577.2,38.6" stroke="#12a52e" stroke-width="1.2" fill="none"/><path d="M583.5,28 V42.8" stroke="#1566ad" stroke-width="1.2"/><path d="M565,45.4 H584" stroke="#a0a0a0" stroke-width="1"/>
<path d="M598.6,30.1 V41 M602.6,29 V42" stroke="#12a52e" stroke-width="1.1"/><rect x="597.4" y="31.3" width="2.5" height="7.8" fill="#d4fadb" stroke="#12a52e" stroke-width="1"/><rect x="601.4" y="30.2" width="2.5" height="9.8" fill="#d4fadb" stroke="#12a52e" stroke-width="1"/>
<path d="M606.3,28 V42.8 M609.6,35.4 H616 M612.8,32.2 L609.6,35.4 L612.8,38.6" stroke="#1566ad" stroke-width="1.2" fill="none"/><path d="M597,45.4 H616" stroke="#a0a0a0" stroke-width="1"/>
<path d="M640,45 H638 Q635.8,45 635.8,42.8 V30 Q635.8,27.7 638,27.7 H651.4 Q653.6,27.7 653.6,30 V36" fill="none" stroke="#1566ad" stroke-width="1.1" stroke-dasharray="2.2 1.8"/>
<path d="M640.4,45 V38.6 Q640.4,37.4 641.6,37.4 H643.4 L644.6,35.4 H649.4 L650.6,37.4 H652.6 Q653.8,37.4 653.8,38.6 V45 Z" fill="#bfe3ff" stroke="#1566ad" stroke-width="1.2" stroke-linejoin="round"/><circle cx="647" cy="40.8" r="1.9" fill="#e8f5ff" stroke="#1566ad" stroke-width="1.1"/>
<rect x="1146" y="11" width="8" height="2" fill="#a8a8a8"/>
<path d="M1167.5,7 V5.6 H1173 V11 H1171.6" fill="none" stroke="#b4b4b4" stroke-width="1"/><rect x="1165.9" y="8" width="5.4" height="4.4" fill="none" stroke="#a8a8a8" stroke-width="1.6"/>
<path d="M1184.5,8 L1189,12.6 M1189,8 L1184.5,12.6" stroke="#a8a8a8" stroke-width="2"/>
<circle cx="1178.6" cy="35.6" r="5" fill="none" stroke="#222" stroke-width="1.2"/><path d="M1182.2,39.4 L1185.8,42.6" stroke="#222" stroke-width="1.3"/>
<path d="M10.9,59.8 V62 M10.9,71.6 V73.8 M7,63.7 H9.2 M19,63.7 H21.2 M13.0,59.8 V62 M13.0,71.6 V73.8 M7,65.8 H9.2 M19,65.8 H21.2 M15.100000000000001,59.8 V62 M15.100000000000001,71.6 V73.8 M7,67.9 H9.2 M19,67.9 H21.2 M17.200000000000003,59.8 V62 M17.200000000000003,71.6 V73.8 M7,70.0 H9.2 M19,70.0 H21.2 " stroke="#1566ad" stroke-width="1.1"/><rect x="9.5" y="62.2" width="9.3" height="9.3" rx="1.2" fill="#bfe3ff" stroke="#1566ad" stroke-width="1.3"/>
<rect x="951.5" y="58.8" width="10" height="7.6" fill="#e4e4ea" stroke="#3c4060" stroke-width="1.1"/><path d="M955,59 V66 M957.4,59 V66" stroke="#8a8ca0" stroke-width="1"/><rect x="959.4" y="60" width="6" height="4.8" rx="1" fill="#f4f4f4" stroke="#3c4060" stroke-width="1.1"/><rect x="961.4" y="61.6" width="2.4" height="1.6" fill="#3c4060"/>
<rect x="999.7" y="62.9" width="10.8" height="3.5" rx="0.8" fill="#f6f6f6" stroke="#3c4060" stroke-width="1.1"/>
<rect x="1026.7" y="58" width="10.6" height="8.2" rx="0.8" fill="#f6f6f6" stroke="#3c4060" stroke-width="1.2"/><rect x="1029.8" y="60.8" width="4.4" height="2.8" fill="none" stroke="#3c4060" stroke-width="1"/>
<path d="M1064.3,57.9 H1067.5 L1069.4,60.5 L1071.3,57.9 H1074.5 L1071,62.1 L1074.6,66.4 H1071.4 L1069.4,63.7 L1067.4,66.4 H1064.2 L1067.8,62.1 Z" fill="#f6f6f6" stroke="#3c4060" stroke-width="1.1" stroke-linejoin="round"/>
<circle cx="194.5" cy="118.4" r="7.7" fill="#d4fadb" stroke="#12a52e" stroke-width="1.3"/><path d="M192.2,115.8 V121 L197.4,118.4 Z" fill="none" stroke="#12a52e" stroke-width="1.2" stroke-linejoin="round"/>
<circle cx="226.5" cy="118.4" r="7.7" fill="#ffddd6" stroke="#e04444" stroke-width="1.3"/><rect x="223.6" y="115.5" width="5.8" height="5.8" fill="none" stroke="#e04444" stroke-width="1.3"/>
<circle cx="258.4" cy="118.4" r="7.7" fill="#e6e6e6" stroke="#c4c4c4" stroke-width="1.3"/><path d="M258.2,116 V120.8 L254.4,118.4 Z M262.6,116 V120.8 L258.8,118.4 Z" fill="none" stroke="#bcbcbc" stroke-width="1"/>
<circle cx="409.5" cy="118.4" r="7.7" fill="#d4fadb" stroke="#12a52e" stroke-width="1.3"/><path d="M406.1,116 V120.8 L410.1,118.4 Z M410.5,116 V120.8 L414.4,118.4 Z" fill="none" stroke="#12a52e" stroke-width="1.1" stroke-linejoin="round"/>
<circle cx="441.5" cy="118.4" r="7.7" fill="#bfe3ff" stroke="#1566ad" stroke-width="1.3"/><path d="M438.6,116 V120.8 L443,118.4 Z M444.5,115.6 V121.2" fill="none" stroke="#1566ad" stroke-width="1.2" stroke-linejoin="round"/>
<path d="M470.4,121.4 C470.6,111.5 481,110.5 485.4,118" fill="none" stroke="#1566ad" stroke-width="1.2"/><path d="M486,114.4 V118.6 H481.8" fill="none" stroke="#1566ad" stroke-width="1.2"/>
<circle cx="470.4" cy="123.4" r="1.7" fill="#bfe3ff" stroke="#1566ad" stroke-width="1.1"/><circle cx="477.3" cy="123.4" r="1.7" fill="#f4f4f4" stroke="#a8a8a8" stroke-width="1.1"/><circle cx="484.3" cy="123.4" r="1.7" fill="#bfe3ff" stroke="#1566ad" stroke-width="1.1"/>
<rect x="634" y="115" width="9" height="10" rx="1" fill="#d8d8d8"/><rect x="632.7" y="113.7" width="9.2" height="10.2" rx="1" fill="#f4f4f4" stroke="#6e5a52" stroke-width="1"/><path d="M634.6,117.2 H640.2 M634.6,119.4 H640.2 M634.6,121.6 H640.2 M636.2,116 V122.6 M638.4,116 V122.6" stroke="#a8acb8" stroke-width="1"/>
<polygon points="645.2,117 652,117 648.6,121" fill="#44546c"/>
<path d="M16.2,189.2 L22.8,184 M18.2,183.8 H23 V188.6" fill="none" stroke="#2aa52a" stroke-width="1.2"/>
<path d="M218.5,142.2 l5,5 M223.5,142.2 l-5,5" stroke="#111" stroke-width="1.6"/>
<path d="M218.5,363 l5,5 M223.5,363 l-5,5" stroke="#111" stroke-width="1.6"/>
<path d="M10.5,706 l5,5 M15.5,706 l-5,5" stroke="#111" stroke-width="1.6"/>
<g transform="translate(0,0)"><path d="M12.5,376.3 V390.5 H26.8" fill="none" stroke="#9a9a9a" stroke-width="1"/><polyline points="14.3,381.8 18,379.5 21.7,384.6 25.9,380.4" fill="none" stroke="#1566ad" stroke-width="1.2"/></g>
<g transform="translate(0,220)"><path d="M12.5,376.3 V390.5 H26.8" fill="none" stroke="#9a9a9a" stroke-width="1"/><polyline points="14.3,381.8 18,379.5 21.7,384.6 25.9,380.4" fill="none" stroke="#1566ad" stroke-width="1.2"/></g>
<g transform="translate(0,0)"><path d="M13.2,627.6 C15,627 15.6,620.6 17.8,620.6 C20,620.6 20,626.4 22,626.4 C24,626.4 24.4,620 26,618.8" fill="none" stroke="#1566ad" stroke-width="1.2" stroke-dasharray="6 1"/><path d="M13,626.6 L26,620.6" stroke="#2aa52a" stroke-width="1.1" stroke-dasharray="3 1.4"/></g>
<g transform="translate(0,20)"><path d="M13.2,627.6 C15,627 15.6,620.6 17.8,620.6 C20,620.6 20,626.4 22,626.4 C24,626.4 24.4,620 26,618.8" fill="none" stroke="#1566ad" stroke-width="1.2" stroke-dasharray="6 1"/><path d="M13,626.6 L26,620.6" stroke="#2aa52a" stroke-width="1.1" stroke-dasharray="3 1.4"/></g>
<polygon points="1076.6,715 1080.3,711.3 1084,715" fill="#505050"/><polygon points="1076.6,838.6 1084,838.6 1080.3,842.4" fill="#505050"/>
</svg>
<span style="left:-9.99px;top:-2px;font:normal 12px/24px 'Liberation Sans', sans-serif;color:#000;white-space:pre;letter-spacing:-0.300px;">View</span>
<span style="left:35.94px;top:-2px;font:normal 12px/24px 'Liberation Sans', sans-serif;color:#000;white-space:pre;transform-origin:0 0;transform:scaleX(0.9842);">Insert</span>
<span style="left:87.66px;top:-2px;font:normal 12px/24px 'Liberation Sans', sans-serif;color:#000;white-space:pre;transform-origin:0 0;transform:scaleX(0.9816);">Charts</span>
<span style="left:144.76px;top:-2px;font:normal 12px/24px 'Liberation Sans', sans-serif;color:#000;white-space:pre;letter-spacing:0.147px;">Tools</span>
<span style="left:195.50px;top:-2px;font:normal 12px/24px 'Liberation Sans', sans-serif;color:#000;white-space:pre;letter-spacing:0.095px;">Window</span>
<span style="left:260.29px;top:-2px;font:normal 12px/24px 'Liberation Sans', sans-serif;color:#000;white-space:pre;letter-spacing:0.155px;">Help</span>
<span style="left:51.99px;top:25px;font:normal 12px/24px 'Liberation Sans', sans-serif;color:#1464a8;white-space:pre;transform-origin:0 0;transform:scaleX(0.9361);-webkit-text-stroke:0.3px #1464a8;">IDE</span>
<span style="left:271.00px;top:25px;font:normal 12px/24px 'Liberation Sans', sans-serif;color:#000;white-space:pre;letter-spacing:0.153px;">Algo Trading</span>
<span style="left:15.03px;top:911px;font:normal 12px/24px 'Liberation Sans', sans-serif;color:#000;white-space:pre;transform-origin:0 0;transform:scaleX(0.9760);">Settings</span>
<span style="left:75.92px;top:911px;font:normal 12px/24px 'Liberation Sans', sans-serif;color:#6d6d6d;white-space:pre;letter-spacing:0.250px;">Inputs</span>
<span style="left:129.93px;top:911px;font:normal 12px/24px 'Liberation Sans', sans-serif;color:#6d6d6d;white-space:pre;transform-origin:0 0;transform:scaleX(0.9571);">Graph</span>
<span style="left:181.92px;top:911px;font:normal 12px/24px 'Liberation Sans', sans-serif;color:#6d6d6d;white-space:pre;letter-spacing:-0.058px;">Optimization Results</span>
<span style="left:311.20px;top:911px;font:normal 12px/24px 'Liberation Sans', sans-serif;color:#6d6d6d;white-space:pre;transform-origin:0 0;transform:scaleX(0.9784);">Agents</span>
<span style="left:367.88px;top:911px;font:normal 12px/24px 'Liberation Sans', sans-serif;color:#6d6d6d;white-space:pre;transform-origin:0 0;transform:scaleX(0.9794);">Journal</span>
<span style="left:1143.82px;top:913px;font:normal 12px/24px 'Liberation Sans', sans-serif;color:#000;white-space:pre;letter-spacing:-0.024px;">Stop</span>
<span style="left:1.04px;top:940px;font:normal 12px/24px 'Liberation Sans', sans-serif;color:#000;white-space:pre;">F1</span>
<span style="left:510.04px;top:940px;font:normal 12px/24px 'Liberation Sans', sans-serif;color:#000;white-space:pre;">Default</span>
<span style="left:1102.64px;top:940px;font:normal 12px/24px 'Liberation Sans', sans-serif;color:#000;white-space:pre;">3473 / 724 Kb</span>
<span style="left:26.93px;top:55px;font:normal 12px/24px 'Liberation Sans', sans-serif;color:#000;white-space:pre;transform-origin:0 0;transform:scaleX(0.9697);">Strategy Tester Visualization : HFT Phase 2 on EURUSD,M1 from 2023.03.17 to 2023.03.21</span>
<span style="left:16.44px;top:80px;font:normal 12px/24px 'Liberation Sans', sans-serif;color:#000;white-space:pre;letter-spacing:-0.081px;">File</span>
<span style="left:57.20px;top:80px;font:normal 12px/24px 'Liberation Sans', sans-serif;color:#000;white-space:pre;transform-origin:0 0;transform:scaleX(0.9464);">View</span>
<span style="left:103.92px;top:80px;font:normal 12px/24px 'Liberation Sans', sans-serif;color:#000;white-space:pre;transform-origin:0 0;transform:scaleX(0.9685);">Charts</span>
<span style="left:160.77px;top:80px;font:normal 12px/24px 'Liberation Sans', sans-serif;color:#000;white-space:pre;transform-origin:0 0;transform:scaleX(0.9572);">Tester</span>
<span style="left:213.54px;top:80px;font:normal 12px/24px 'Liberation Sans', sans-serif;color:#000;white-space:pre;letter-spacing:0.305px;">Help</span>
<span style="left:490.83px;top:108px;font:normal 12px/24px 'Liberation Sans', sans-serif;color:#000;white-space:pre;transform-origin:0 0;transform:scaleX(0.9728);">Skip to</span>
<span style="left:539.76px;top:108px;font:normal 12px/24px 'Liberation Sans', sans-serif;color:#000;white-space:pre;transform-origin:0 0;transform:scaleX(0.8973);">2024.02.08 00:00</span>
<span style="left:10.82px;top:133px;font:normal 11px/22px 'Liberation Sans', sans-serif;color:#4e566a;white-space:pre;letter-spacing:0.126px;">Market Watch : 2023.03.17</span>
<span style="left:15.62px;top:153px;font:normal 12px/24px 'Liberation Sans', sans-serif;color:#000;white-space:pre;letter-spacing:0.122px;">Symbol</span>
<span style="left:125.84px;top:153px;font:normal 12px/24px 'Liberation Sans', sans-serif;color:#000;white-space:pre;letter-spacing:-0.105px;">Bid</span>
<span style="left:170.60px;top:153px;font:normal 12px/24px 'Liberation Sans', sans-serif;color:#000;white-space:pre;transform-origin:0 0;transform:scaleX(0.8994);">Ask</span>
<span style="left:216.52px;top:153px;font:normal 12px/24px 'Liberation Sans', sans-serif;color:#000;white-space:pre;">!</span>
<span style="left:30.49px;top:175px;font:normal 12px/24px 'Liberation Sans', sans-serif;color:#000;white-space:pre;transform-origin:0 0;transform:scaleX(0.8414);">EURUSD</span>
<span style="left:105.24px;top:175px;font:normal 12px/24px 'Liberation Sans', sans-serif;color:#0000e0;white-space:pre;transform-origin:0 0;transform:scaleX(0.9097);">1.06066</span>
<span style="left:151.03px;top:175px;font:normal 12px/24px 'Liberation Sans', sans-serif;color:#0000e0;white-space:pre;transform-origin:0 0;transform:scaleX(0.9120);">1.06136</span>
<span style="left:209.97px;top:175px;font:normal 12px/24px 'Liberation Sans', sans-serif;color:#000;white-space:pre;transform-origin:0 0;transform:scaleX(0.8852);">70</span>
<span style="left:21.73px;top:329px;font:normal 12px/24px 'Liberation Sans', sans-serif;color:#000;white-space:pre;transform-origin:0 0;transform:scaleX(0.9829);">Symbols</span>
<span style="left:87.57px;top:329px;font:normal 12px/24px 'Liberation Sans', sans-serif;color:#6d6d6d;white-space:pre;transform-origin:0 0;transform:scaleX(0.9721);">Ticks</span>
<span style="left:10.84px;top:354px;font:normal 11px/22px 'Liberation Sans', sans-serif;color:#4e566a;white-space:pre;transform-origin:0 0;transform:scaleX(0.9796);">Data Window</span>
<span style="left:30.95px;top:372px;font:normal 12px/24px 'Liberation Sans', sans-serif;color:#000;white-space:pre;transform-origin:0 0;transform:scaleX(0.8892);">EURUSD,M1</span>
<span style="left:30.84px;top:392px;font:normal 12px/24px 'Liberation Sans', sans-serif;color:#000;white-space:pre;letter-spacing:-0.018px;">Date</span>
<span style="left:31.56px;top:412px;font:normal 12px/24px 'Liberation Sans', sans-serif;color:#000;white-space:pre;letter-spacing:0.284px;">Time</span>
<span style="left:31.33px;top:432px;font:normal 12px/24px 'Liberation Sans', sans-serif;color:#000;white-space:pre;transform-origin:0 0;transform:scaleX(0.9751);">Open</span>
<span style="left:30.84px;top:452px;font:normal 12px/24px 'Liberation Sans', sans-serif;color:#000;white-space:pre;letter-spacing:0.651px;">High</span>
<span style="left:30.84px;top:472px;font:normal 12px/24px 'Liberation Sans', sans-serif;color:#000;white-space:pre;letter-spacing:0.076px;">Low</span>
<span style="left:31.23px;top:492px;font:normal 12px/24px 'Liberation Sans', sans-serif;color:#000;white-space:pre;transform-origin:0 0;transform:scaleX(0.9546);">Close</span>
<span style="left:31.56px;top:512px;font:normal 12px/24px 'Liberation Sans', sans-serif;color:#000;white-space:pre;letter-spacing:0.126px;">Tick Volume</span>
<span style="left:31.35px;top:532px;font:normal 12px/24px 'Liberation Sans', sans-serif;color:#000;white-space:pre;transform-origin:0 0;transform:scaleX(0.9296);">Spread</span>
<span style="left:30.84px;top:552px;font:normal 12px/24px 'Liberation Sans', sans-serif;color:#000;white-space:pre;letter-spacing:0.046px;">High Ask</span>
<span style="left:30.84px;top:572px;font:normal 12px/24px 'Liberation Sans', sans-serif;color:#000;white-space:pre;letter-spacing:0.024px;">Low Bid</span>
<span style="left:30.72px;top:592px;font:normal 12px/24px 'Liberation Sans', sans-serif;color:#000;white-space:pre;letter-spacing:0.103px;">Indicator window 1</span>
<span style="left:30.84px;top:612px;font:normal 12px/24px 'Liberation Sans', sans-serif;color:#000;white-space:pre;letter-spacing:-0.005px;">Bid</span>
<span style="left:31.80px;top:632px;font:normal 12px/24px 'Liberation Sans', sans-serif;color:#000;white-space:pre;transform-origin:0 0;transform:scaleX(0.9094);">Ask</span>
<span style="left:28.46px;top:704px;font:normal 12px/24px 'Liberation Sans', sans-serif;color:#000;white-space:pre;letter-spacing:0.084px;">Time</span>
<span style="left:187.69px;top:704px;font:normal 12px/24px 'Liberation Sans', sans-serif;color:#000;white-space:pre;transform-origin:0 0;transform:scaleX(0.9514);">Message</span>
<span style="left:42.66px;top:726px;font:normal 12px/24px 'Liberation Sans', sans-serif;color:#000;white-space:pre;transform-origin:0 0;transform:scaleX(0.9001);">2024.02.09 09:29:32.433</span>
<span style="left:199.08px;top:728px;font:normal 11.67px/23px 'Liberation Mono', monospace;color:#000;white-space:pre;letter-spacing:0.030px;">PR_Slope=0.5</span>
<span style="left:42.66px;top:746px;font:normal 12px/24px 'Liberation Sans', sans-serif;color:#000;white-space:pre;transform-origin:0 0;transform:scaleX(0.9001);">2024.02.09 09:29:32.433</span>
<span style="left:199.55px;top:748px;font:normal 11.67px/23px 'Liberation Mono', monospace;color:#000;white-space:pre;letter-spacing:0.030px;">SETTINGS4==ENVELOPE SETTINGS===============</span>
<span style="left:42.66px;top:766px;font:normal 12px/24px 'Liberation Sans', sans-serif;color:#000;white-space:pre;transform-origin:0 0;transform:scaleX(0.9001);">2024.02.09 09:29:32.433</span>
<span style="left:199.43px;top:768px;font:normal 11.67px/23px 'Liberation Mono', monospace;color:#000;white-space:pre;letter-spacing:0.030px;">ma_period=1</span>
<span style="left:42.66px;top:786px;font:normal 12px/24px 'Liberation Sans', sans-serif;color:#000;white-space:pre;transform-origin:0 0;transform:scaleX(0.9001);">2024.02.09 09:29:32.433</span>
<span style="left:199.20px;top:788px;font:normal 11.67px/23px 'Liberation Mono', monospace;color:#000;white-space:pre;letter-spacing:0.030px;">env_dev=0.02</span>
<span style="left:42.66px;top:806px;font:normal 12px/24px 'Liberation Sans', sans-serif;color:#000;white-space:pre;transform-origin:0 0;transform:scaleX(0.9009);">2024.02.09 09:29:32.451</span>
<span style="left:184.97px;top:808px;font:normal 11.67px/23px 'Liberation Mono', monospace;color:#000;white-space:pre;letter-spacing:0.030px;">program file added: \Indicators\Market\Ticks.ex5. 105296 bytes loaded</span>
<span style="left:42.66px;top:826px;font:normal 12px/24px 'Liberation Sans', sans-serif;color:#000;white-space:pre;transform-origin:0 0;transform:scaleX(0.9009);">2024.02.09 09:29:32.522</span>
<span style="left:185.08px;top:828px;font:normal 11.67px/23px 'Liberation Mono', monospace;color:#000;white-space:pre;letter-spacing:0.030px;">EURUSD : real ticks begin from 2023.02.08 00:00:00</span>
<span style="left:33.96px;top:847px;font:normal 12px/24px 'Liberation Sans', sans-serif;color:#6d6d6d;white-space:pre;transform-origin:0 0;transform:scaleX(0.9792);">Trade</span>
<span style="left:83.34px;top:847px;font:normal 12px/24px 'Liberation Sans', sans-serif;color:#6d6d6d;white-space:pre;letter-spacing:0.137px;">History</span>
<span style="left:142.02px;top:847px;font:normal 12px/24px 'Liberation Sans', sans-serif;color:#6d6d6d;white-space:pre;letter-spacing:-0.095px;">Operations</span>
<span style="left:219.38px;top:847px;font:normal 12px/24px 'Liberation Sans', sans-serif;color:#000;white-space:pre;letter-spacing:-0.082px;">Journal</span>
<span style="left:-0.22px;top:-15px;font:normal 11px/22px 'Liberation Sans', sans-serif;color:#5a6478;white-space:pre;transform-origin:0 0;transform:translate(8px,869px) rotate(-90deg);left:0;top:0;line-height:12px;">Toolbox</span>
<span style="left:7.80px;top:876px;font:normal 12px/24px 'Liberation Sans', sans-serif;color:#000;white-space:pre;transform-origin:0 0;transform:scaleX(0.9331);">For Help, press F1</span>
<span style="left:238.06px;top:137px;font:normal 9.6px/19px 'Liberation Sans', sans-serif;color:#fff;white-space:pre;transform-origin:0 0;transform:translateY(-1px) scaleX(0.9693);-webkit-text-stroke:0.25px #fff;">EURUSD,M1  1.06066 1.06066 1.06066 1.06066</span>
<span style="left:1043.02px;top:143px;font:normal 9.6px/19px 'Liberation Sans', sans-serif;color:#fff;white-space:pre;transform-origin:0 0;transform:translateY(-1px) scaleX(0.9367);-webkit-text-stroke:0.25px #fff;">1.06175</span>
<span style="left:1043.02px;top:181px;font:normal 9.6px/19px 'Liberation Sans', sans-serif;color:#fff;white-space:pre;transform-origin:0 0;transform:translateY(-1px) scaleX(0.9367);-webkit-text-stroke:0.25px #fff;">1.06160</span>
<span style="left:1043.02px;top:220px;font:normal 9.6px/19px 'Liberation Sans', sans-serif;color:#fff;white-space:pre;transform-origin:0 0;transform:translateY(-1px) scaleX(0.9367);-webkit-text-stroke:0.25px #fff;">1.06145</span>
<span style="left:1043.02px;top:258px;font:normal 9.6px/19px 'Liberation Sans', sans-serif;color:#fff;white-space:pre;transform-origin:0 0;transform:translateY(-1px) scaleX(0.9367);-webkit-text-stroke:0.25px #fff;">1.06130</span>
<span style="left:1043.01px;top:296px;font:normal 9.6px/19px 'Liberation Sans', sans-serif;color:#fff;white-space:pre;transform-origin:0 0;transform:translateY(-1px) scaleX(0.9569);-webkit-text-stroke:0.25px #fff;">1.06115</span>
<span style="left:1043.02px;top:335px;font:normal 9.6px/19px 'Liberation Sans', sans-serif;color:#fff;white-space:pre;transform-origin:0 0;transform:translateY(-1px) scaleX(0.9367);-webkit-text-stroke:0.25px #fff;">1.06100</span>
<span style="left:1043.02px;top:373px;font:normal 9.6px/19px 'Liberation Sans', sans-serif;color:#fff;white-space:pre;transform-origin:0 0;transform:translateY(-1px) scaleX(0.9367);-webkit-text-stroke:0.25px #fff;">1.06085</span>
<span style="left:1043.02px;top:411px;font:normal 9.6px/19px 'Liberation Sans', sans-serif;color:#fff;white-space:pre;transform-origin:0 0;transform:translateY(-1px) scaleX(0.9367);-webkit-text-stroke:0.25px #fff;">1.06070</span>
<span style="left:1043.02px;top:449px;font:normal 9.6px/19px 'Liberation Sans', sans-serif;color:#fff;white-space:pre;transform-origin:0 0;transform:translateY(-1px) scaleX(0.9367);-webkit-text-stroke:0.25px #fff;">1.06055</span>
<div style="left:1040px;top:247px;width:39px;height:11px;background:#ff0000;"></div>
<div style="left:1040px;top:426px;width:39px;height:11px;background:#778899;"></div>
<span style="left:1043.02px;top:243px;font:normal 9.6px/19px 'Liberation Sans', sans-serif;color:#000;white-space:pre;transform-origin:0 0;transform:translateY(-1px) scaleX(0.9367);-webkit-text-stroke:0.25px #000;">1.06136</span>
<span style="left:1043.02px;top:422px;font:normal 9.6px/19px 'Liberation Sans', sans-serif;color:#000;white-space:pre;transform-origin:0 0;transform:translateY(-1px) scaleX(0.9367);-webkit-text-stroke:0.25px #000;">1.06066</span>
<span style="left:238.32px;top:498px;font:normal 9.6px/19px 'Liberation Sans', sans-serif;color:#fff;white-space:pre;transform-origin:0 0;transform:translateY(-1px) scaleX(0.9508);-webkit-text-stroke:0.25px #fff;">Ticks 1.06066 1.06136</span>
<span style="left:1043.02px;top:494px;font:normal 9.6px/19px 'Liberation Sans', sans-serif;color:#fff;white-space:pre;transform-origin:0 0;transform:translateY(-1px) scaleX(0.9340);-webkit-text-stroke:0.25px #fff;">1.06174</span>
<span style="left:1043.02px;top:519px;font:normal 9.6px/19px 'Liberation Sans', sans-serif;color:#fff;white-space:pre;transform-origin:0 0;transform:translateY(-1px) scaleX(0.9394);-webkit-text-stroke:0.25px #fff;">1.06151</span>
<span style="left:1043.02px;top:579px;font:normal 9.6px/19px 'Liberation Sans', sans-serif;color:#fff;white-space:pre;transform-origin:0 0;transform:translateY(-1px) scaleX(0.9367);-webkit-text-stroke:0.25px #fff;">1.06105</span>
<span style="left:1043.02px;top:639px;font:normal 9.6px/19px 'Liberation Sans', sans-serif;color:#fff;white-space:pre;transform-origin:0 0;transform:translateY(-1px) scaleX(0.9367);-webkit-text-stroke:0.25px #fff;">1.06058</span>
<span style="left:1043.02px;top:662px;font:normal 9.6px/19px 'Liberation Sans', sans-serif;color:#fff;white-space:pre;transform-origin:0 0;transform:translateY(-1px) scaleX(0.9367);-webkit-text-stroke:0.25px #fff;">1.06035</span>
<span style="left:233.96px;top:678px;font:normal 9.6px/19px 'Liberation Sans', sans-serif;color:#fff;white-space:pre;transform-origin:0 0;transform:translateY(-1px) scaleX(0.9549);-webkit-text-stroke:0.25px #fff;">16 Mar 2023</span>
<span style="left:297.95px;top:678px;font:normal 9.6px/19px 'Liberation Sans', sans-serif;color:#fff;white-space:pre;transform-origin:0 0;transform:translateY(-1px) scaleX(0.9676);-webkit-text-stroke:0.25px #fff;">16 Mar 23:40</span>
<span style="left:361.95px;top:678px;font:normal 9.6px/19px 'Liberation Sans', sans-serif;color:#fff;white-space:pre;transform-origin:0 0;transform:translateY(-1px) scaleX(0.9693);-webkit-text-stroke:0.25px #fff;">16 Mar 23:42</span>
<span style="left:425.95px;top:678px;font:normal 9.6px/19px 'Liberation Sans', sans-serif;color:#fff;white-space:pre;transform-origin:0 0;transform:translateY(-1px) scaleX(0.9659);-webkit-text-stroke:0.25px #fff;">16 Mar 23:44</span>
<span style="left:489.95px;top:678px;font:normal 9.6px/19px 'Liberation Sans', sans-serif;color:#fff;white-space:pre;transform-origin:0 0;transform:translateY(-1px) scaleX(0.9676);-webkit-text-stroke:0.25px #fff;">16 Mar 23:46</span>
<span style="left:553.95px;top:678px;font:normal 9.6px/19px 'Liberation Sans', sans-serif;color:#fff;white-space:pre;transform-origin:0 0;transform:translateY(-1px) scaleX(0.9676);-webkit-text-stroke:0.25px #fff;">16 Mar 23:48</span>
<span style="left:617.95px;top:678px;font:normal 9.6px/19px 'Liberation Sans', sans-serif;color:#fff;white-space:pre;transform-origin:0 0;transform:translateY(-1px) scaleX(0.9676);-webkit-text-stroke:0.25px #fff;">16 Mar 23:50</span>
<span style="left:681.95px;top:678px;font:normal 9.6px/19px 'Liberation Sans', sans-serif;color:#fff;white-space:pre;transform-origin:0 0;transform:translateY(-1px) scaleX(0.9693);-webkit-text-stroke:0.25px #fff;">16 Mar 23:52</span>
<span style="left:745.95px;top:678px;font:normal 9.6px/19px 'Liberation Sans', sans-serif;color:#fff;white-space:pre;transform-origin:0 0;transform:translateY(-1px) scaleX(0.9659);-webkit-text-stroke:0.25px #fff;">16 Mar 23:54</span>
<span style="left:809.95px;top:678px;font:normal 9.6px/19px 'Liberation Sans', sans-serif;color:#fff;white-space:pre;transform-origin:0 0;transform:translateY(-1px) scaleX(0.9676);-webkit-text-stroke:0.25px #fff;">16 Mar 23:56</span>
<span style="left:873.95px;top:678px;font:normal 9.6px/19px 'Liberation Sans', sans-serif;color:#fff;white-space:pre;transform-origin:0 0;transform:translateY(-1px) scaleX(0.9676);-webkit-text-stroke:0.25px #fff;">16 Mar 23:58</span>
<span style="left:937.95px;top:678px;font:normal 9.6px/19px 'Liberation Sans', sans-serif;color:#fff;white-space:pre;transform-origin:0 0;transform:translateY(-1px) scaleX(0.9693);-webkit-text-stroke:0.25px #fff;">17 Mar 00:01</span>
<span style="left:1148.87px;top:108px;font:normal 9.6px/19px 'Liberation Sans', sans-serif;color:#fff;white-space:pre;transform-origin:0 0;transform:translateY(-1px) scaleX(0.9352);-webkit-text-stroke:0.25px #fff;">1.06170</span>
<span style="left:1148.87px;top:138px;font:normal 9.6px/19px 'Liberation Sans', sans-serif;color:#fff;white-space:pre;transform-origin:0 0;transform:translateY(-1px) scaleX(0.9352);-webkit-text-stroke:0.25px #fff;">1.06160</span>
<span style="left:1148.87px;top:169px;font:normal 9.6px/19px 'Liberation Sans', sans-serif;color:#fff;white-space:pre;transform-origin:0 0;transform:translateY(-1px) scaleX(0.9352);-webkit-text-stroke:0.25px #fff;">1.06150</span>
<span style="left:1148.87px;top:199px;font:normal 9.6px/19px 'Liberation Sans', sans-serif;color:#fff;white-space:pre;transform-origin:0 0;transform:translateY(-1px) scaleX(0.9352);-webkit-text-stroke:0.25px #fff;">1.06140</span>
<span style="left:1148.87px;top:230px;font:normal 9.6px/19px 'Liberation Sans', sans-serif;color:#fff;white-space:pre;transform-origin:0 0;transform:translateY(-1px) scaleX(0.9352);-webkit-text-stroke:0.25px #fff;">1.06130</span>
<span style="left:1148.87px;top:261px;font:normal 9.6px/19px 'Liberation Sans', sans-serif;color:#fff;white-space:pre;transform-origin:0 0;transform:translateY(-1px) scaleX(0.9352);-webkit-text-stroke:0.25px #fff;">1.06120</span>
<span style="left:1148.86px;top:291px;font:normal 9.6px/19px 'Liberation Sans', sans-serif;color:#fff;white-space:pre;transform-origin:0 0;transform:translateY(-1px) scaleX(0.9554);-webkit-text-stroke:0.25px #fff;">1.06110</span>
<span style="left:1148.87px;top:322px;font:normal 9.6px/19px 'Liberation Sans', sans-serif;color:#fff;white-space:pre;transform-origin:0 0;transform:translateY(-1px) scaleX(0.9352);-webkit-text-stroke:0.25px #fff;">1.06100</span>
<span style="left:1148.87px;top:352px;font:normal 9.6px/19px 'Liberation Sans', sans-serif;color:#fff;white-space:pre;transform-origin:0 0;transform:translateY(-1px) scaleX(0.9352);-webkit-text-stroke:0.25px #fff;">1.06090</span>
<span style="left:1148.87px;top:383px;font:normal 9.6px/19px 'Liberation Sans', sans-serif;color:#fff;white-space:pre;transform-origin:0 0;transform:translateY(-1px) scaleX(0.9352);-webkit-text-stroke:0.25px #fff;">1.06080</span>
<span style="left:1148.87px;top:413px;font:normal 9.6px/19px 'Liberation Sans', sans-serif;color:#fff;white-space:pre;transform-origin:0 0;transform:translateY(-1px) scaleX(0.9352);-webkit-text-stroke:0.25px #fff;">1.06070</span>
<span style="left:1148.87px;top:444px;font:normal 9.6px/19px 'Liberation Sans', sans-serif;color:#fff;white-space:pre;transform-origin:0 0;transform:translateY(-1px) scaleX(0.9352);-webkit-text-stroke:0.25px #fff;">1.06060</span>
<span style="left:1148.87px;top:474px;font:normal 9.6px/19px 'Liberation Sans', sans-serif;color:#fff;white-space:pre;transform-origin:0 0;transform:translateY(-1px) scaleX(0.9352);-webkit-text-stroke:0.25px #fff;">1.06050</span>
<div style="left:1146px;top:362px;width:39px;height:11px;background:#778899;"></div>
<span style="left:1148.87px;top:358px;font:normal 9.6px/19px 'Liberation Sans', sans-serif;color:#000;white-space:pre;transform-origin:0 0;transform:translateY(-1px) scaleX(0.9352);-webkit-text-stroke:0.25px #000;">1.06088</span>
<span style="left:1100.52px;top:514px;font:normal 9.6px/19px 'Liberation Sans', sans-serif;color:#fff;white-space:pre;transform-origin:0 0;transform:translateY(-1px) scaleX(0.9660);-webkit-text-stroke:0.25px #fff;">09:29</span>
<span style="left:19.26px;top:23px;font:normal 14px/28px 'Liberation Sans', sans-serif;color:#c79300;white-space:pre;">$</span>
</div></body></html>
